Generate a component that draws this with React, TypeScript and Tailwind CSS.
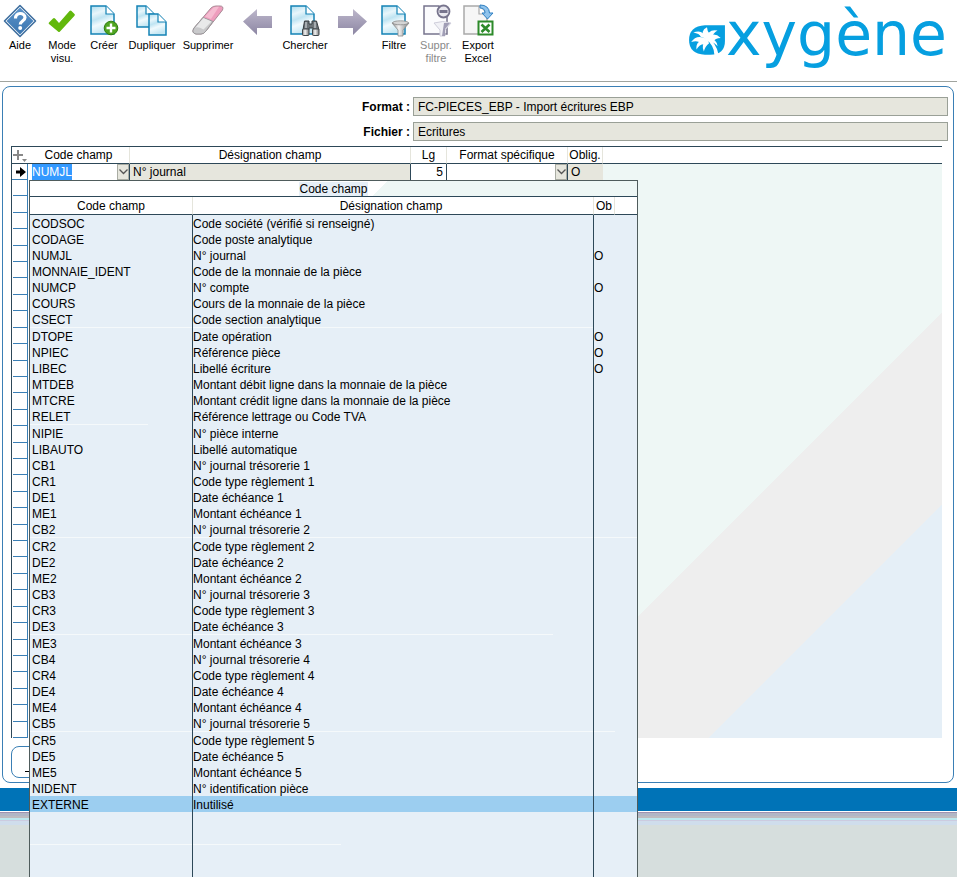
import React, { useState } from "react";

interface Field {
  code: string;
  label: string;
  required?: boolean;
}

// Fields offered by the drop-down. "rule" holds the width of the pale line
// that closes each block, one entry per column it crosses.
const fieldGroups: { rule: string[]; fields: Field[] }[] = [
  {
    rule: ["w-full", "w-full", "", ""],
    fields: [
      { code: "CODSOC", label: "Code société (vérifié si renseigné)" },
      { code: "CODAGE", label: "Code poste analytique" },
      { code: "NUMJL", label: "N° journal", required: true },
      { code: "MONNAIE_IDENT", label: "Code de la monnaie de la pièce" },
      { code: "NUMCP", label: "N° compte", required: true },
      { code: "COURS", label: "Cours de la monnaie de la pièce" },
      { code: "CSECT", label: "Code section analytique" },
    ],
  },
  {
    rule: ["w-[118px]", "", "", ""],
    fields: [
      { code: "DTOPE", label: "Date opération", required: true },
      { code: "NPIEC", label: "Référence pièce", required: true },
      { code: "LIBEC", label: "Libellé écriture", required: true },
      { code: "MTDEB", label: "Montant débit ligne dans la monnaie de la pièce" },
      { code: "MTCRE", label: "Montant crédit ligne dans la monnaie de la pièce" },
      { code: "RELET", label: "Référence lettrage ou Code TVA" },
    ],
  },
  {
    rule: ["w-full", "w-full", "w-full", "w-full"],
    fields: [
      { code: "NIPIE", label: "N° pièce interne" },
      { code: "LIBAUTO", label: "Libellé automatique" },
      { code: "CB1", label: "N° journal trésorerie 1" },
      { code: "CR1", label: "Code type règlement 1" },
      { code: "DE1", label: "Date échéance 1" },
      { code: "ME1", label: "Montant échéance 1" },
      { code: "CB2", label: "N° journal trésorerie 2" },
    ],
  },
  {
    rule: ["w-full", "w-[360px]", "", ""],
    fields: [
      { code: "CR2", label: "Code type règlement 2" },
      { code: "DE2", label: "Date échéance 2" },
      { code: "ME2", label: "Montant échéance 2" },
      { code: "CB3", label: "N° journal trésorerie 3" },
      { code: "CR3", label: "Code type règlement 3" },
      { code: "DE3", label: "Date échéance 3" },
    ],
  },
  {
    rule: ["w-full", "w-full", "w-full", ""],
    fields: [
      { code: "ME3", label: "Montant échéance 3" },
      { code: "CB4", label: "N° journal trésorerie 4" },
      { code: "CR4", label: "Code type règlement 4" },
      { code: "DE4", label: "Date échéance 4" },
      { code: "ME4", label: "Montant échéance 4" },
      { code: "CB5", label: "N° journal trésorerie 5" },
    ],
  },
  {
    rule: [],
    fields: [
      { code: "CR5", label: "Code type règlement 5" },
      { code: "DE5", label: "Date échéance 5" },
      { code: "ME5", label: "Montant échéance 5" },
      { code: "NIDENT", label: "N° identification pièce" },
      { code: "EXTERNE", label: "Inutilisé" },
    ],
  },
];

const GUTTER_ROWS = 34;

function Page({ x = 0, y = 0, w = 24, h = 29, stroke = "#1583b5", fill = "url(#sheet)" }) {
  const fold = 8;
  return (
    <g>
      <path
        d={`M${x + 1} ${y + 1}h${w - fold}l${fold} ${fold}v${h - fold}h${-w}z`}
        fill={fill}
        stroke={stroke}
        strokeWidth="1.5"
      />
      <path d={`M${x + 1 + w - fold} ${y + 1}v${fold}h${fold}`} fill="#fff" stroke={stroke} strokeWidth="1.2" />
    </g>
  );
}

function Defs() {
  return (
    <svg width="0" height="0" className="absolute" aria-hidden="true">
      <defs>
        <linearGradient id="sheet" x1="0" y1="0" x2="0.3" y2="1">
          <stop offset="0" stopColor="#a9dcef" />
          <stop offset="0.3" stopColor="#e8f6fb" />
          <stop offset="0.5" stopColor="#bfe4f2" />
          <stop offset="0.7" stopColor="#f1fafd" />
          <stop offset="1" stopColor="#c5e7f3" />
        </linearGradient>
        <linearGradient id="metal" x1="0" y1="0" x2="1" y2="0">
          <stop offset="0" stopColor="#8a8a8a" />
          <stop offset="0.4" stopColor="#f4f4f4" />
          <stop offset="1" stopColor="#7b7b7b" />
        </linearGradient>
        <linearGradient id="arrow" x1="0" y1="0" x2="0" y2="1">
          <stop offset="0" stopColor="#bdb7cb" />
          <stop offset="1" stopColor="#8c86a3" />
        </linearGradient>
        <linearGradient id="diamond" x1="0" y1="0" x2="0" y2="1">
          <stop offset="0" stopColor="#5b93c9" />
          <stop offset="1" stopColor="#3a75b0" />
        </linearGradient>
      </defs>
    </svg>
  );
}

const HelpIcon = () => (
  <svg width="34" height="34" viewBox="0 0 34 34">
    <path d="M17 1.500 32.500 17 17 32.500 1.500 17z" fill="#fff" stroke="#3f6f9f" strokeWidth="1.600" strokeLinejoin="round" />
    <path d="M17 3.500 30.500 17 17 30.500 3.500 17z" fill="url(#diamond)" />
    <path d="M12.500 14.500c-.5-6.500 9.500-6.500 9.500-1 0 3.500-4.800 3.500-4.800 7" fill="none" stroke="#fff" strokeWidth="3.200" />
    <circle cx="17.200" cy="24" r="2" fill="#fff" />
  </svg>
);

const CheckIcon = () => (
  <svg width="34" height="34" viewBox="0 0 34 34">
    <path
      d="M4 18.500 8 14.500q1-.8 2 0l4 4.500L24.500 7q1-1 2 0l3 3q.8.800 0 1.700L15 27.500q-1 1-2 0L4 20q-.8-.8 0-1.500z"
      fill="#62b80c"
    />
  </svg>
);

const CreateIcon = () => (
  <svg width="34" height="34" viewBox="0 0 34 34">
    <Page x={3} y={1} w={23} h={28} />
    <circle cx="24" cy="24" r="6.800" fill="#4fa41f" stroke="#2f7d0f" />
    <path d="M24 19.500v9M19.500 24h9" stroke="#fff" strokeWidth="2.400" />
  </svg>
);

const DuplicateIcon = () => (
  <svg width="34" height="34" viewBox="0 0 34 34">
    <Page x={1} y={1} w={17} h={21} />
    <Page x={13} y={9} w={17} h={21} />
  </svg>
);

const EraserIcon = () => (
  <svg width="34" height="34" viewBox="0 0 34 34">
    <path d="M3 24 20 4q2-2 5-2h4q4 0 2.500 4L15 27q-2 3-5 3H5q-5-1-2-6z" fill="#ee9dbd" stroke="#a98b96" />
    <path d="M3 24 12 13.500l10 4L15 27q-2 3-5 3H5q-5-1-2-6z" fill="#c9c9cb" stroke="#9a9a9c" />
    <path d="M4.500 23.500 12.500 14l8 3.500-8 8q-5-3-8-2z" fill="#e9e9ea" />
    <path d="M14 12.500 22 4q2-1.500 6-1.200L20 15z" fill="#f5bcd1" />
  </svg>
);

const PrevIcon = () => (
  <svg width="34" height="34" viewBox="0 0 34 34">
    <path d="M2 17.500 16 5v7h15v12H16v7z" fill="url(#arrow)" />
  </svg>
);

const NextIcon = () => (
  <svg width="34" height="34" viewBox="0 0 34 34">
    <path d="M32 17.500 18 5v7H3v12h15v7z" fill="url(#arrow)" />
  </svg>
);

const SearchIcon = () => (
  <svg width="34" height="34" viewBox="0 0 34 34">
    <Page x={2} y={1} w={23} h={28} />
    <path d="M16.500 17h4.500v3h3v-3h4.500l2.500 9h-6v-2h-4v2h-6z" fill="#6d7478" stroke="#363c40" />
    <path d="M18 18v6M27 18v6" stroke="#b9bfc2" strokeWidth="1.500" />
    <rect x="14.500" y="25" width="6.500" height="6.500" rx="1" fill="url(#metal)" stroke="#40474b" />
    <rect x="24.500" y="25" width="6.500" height="6.500" rx="1" fill="url(#metal)" stroke="#40474b" />
  </svg>
);

const FilterIcon = () => (
  <svg width="34" height="34" viewBox="0 0 34 34">
    <Page x={4} y={1} w={23} h={28} />
    <path d="M15 19q9-3 17 0l-6 7v6h-5v-6z" fill="url(#metal)" stroke="#8b8b8b" strokeWidth=".8" />
    <ellipse cx="23.500" cy="18.800" rx="8" ry="2" fill="#d5d5d5" stroke="#8b8b8b" strokeWidth=".8" />
  </svg>
);

const ClearFilterIcon = () => (
  <svg width="34" height="34" viewBox="0 0 34 34">
    <Page x={4} y={1} w={23} h={28} stroke="#77748d" fill="#fbfbfd" />
    <circle cx="24.500" cy="7.500" r="6" fill="#e9e8ef" stroke="#77748d" strokeWidth="1.800" />
    <path d="M20.500 7.500h8" stroke="#77748d" strokeWidth="3" />
    <path d="M15 19q9-3 17 0l-6 7v6h-5v-6z" fill="#f1f1f6" stroke="#cfcedb" />
    <path d="M25 19h6l-5 6v7h-3z" fill="#a19eb6" />
  </svg>
);

const ExcelIcon = () => (
  <svg width="34" height="34" viewBox="0 0 34 34">
    <Page x={2} y={1} w={23} h={28} stroke="#a9a9a9" fill="#f6f6f6" />
    <path d="M19 1q9 0 9.500 8h3.500l-5.500 6-5.500-6h3q0-5-5-5z" fill="#8fc3ec" stroke="#2f7fc1" />
    <rect x="17.500" y="17.500" width="14" height="13" fill="#fff" stroke="#2d8a2a" strokeWidth="2" />
    <path d="m20.500 20.500 8 7.500m0-7.500-8 7.500" stroke="#2d8a2a" strokeWidth="2.600" />
  </svg>
);

interface ToolProps {
  icon: React.ReactNode;
  label?: string;
  name?: string;
  width: string;
  disabled?: boolean;
}

function Tool({ icon, label, name, width, disabled }: ToolProps) {
  return (
    <button
      type="button"
      aria-label={name}
      disabled={disabled}
      className={`flex shrink-0 flex-col items-center gap-px text-[11px] leading-[13px] ${width} ${
        disabled ? "text-[#8a8a8a]" : "text-black"
      }`}
    >
      {icon}
      {label && <span className="whitespace-pre-line">{label}</span>}
    </button>
  );
}

function Logo() {
  return (
    <div className="ml-auto flex items-start pr-[10px]">
      <svg width="38" height="32" viewBox="0 0 36 30" className="mt-5" role="img" aria-label="o">
        <path d="M16 1H35V16Q35 29 21 29H16Q1 28 1 15 1 2 16 1z" fill="#069fe0" />
        <path d="M16 13q9 7 9 16h4q-2-11-11-17z" fill="#fff" />
        <g fill="#fff">
          <path d="M18 14Q14 4 5 8q6 1 7 4z" />
          <path d="M18 14Q8 9 3 17q6-2 9 1z" />
          <path d="M18 14Q7 15 8 24q3-5 7-5z" />
          <path d="M18 14Q12 19 15 26q1-5 5-8z" />
          <path d="M16 14Q11 6 18 3q0 4 3 7z" />
          <path d="M17 14Q19 4 28 6q-4 2-5 6z" />
          <path d="M16 14Q24 6 31 13q-5 0-8 4z" />
          <path d="M16 14Q27 12 28 21q-3-4-8-4z" />
        </g>
      </svg>
      <span className="font-['DejaVu_Sans',sans-serif] text-[60px] leading-[60px] text-[#069fe0]">xygène</span>
    </div>
  );
}

function ComboArrow({ label }: { label: string }) {
  return (
    <button
      type="button"
      aria-label={label}
      className="flex h-4 w-3 shrink-0 items-center justify-center border border-[#a9aca3] bg-[#e6e6dd]"
    >
      <svg width="9" height="6" viewBox="0 0 9 6">
        <path d="m.5.500 4 4 4-4" fill="none" stroke="#555" strokeWidth="1.300" />
      </svg>
    </button>
  );
}

function RuleRow({ widths }: { widths: string[] }) {
  return (
    <tr className="h-px" aria-hidden="true">
      {widths.map((width, ind) => (
        <td key={ind} className={`p-0 ${ind < 2 ? "border-r border-[#2d4858]" : ""}`}>
          <div className={`h-px ${width ? "bg-[#f5f9fb]" : ""} ${width}`} />
        </td>
      ))}
    </tr>
  );
}

function BlankRow({ height }: { height: string }) {
  return (
    <tr className={height} aria-hidden="true">
      <td className="border-r border-[#2d4858]" />
      <td className="border-r border-[#2d4858]" />
      <td />
      <td />
    </tr>
  );
}

function FieldPicker({ selected, onSelect }: { selected: string; onSelect: (code: string) => void }) {
  return (
    <div className="absolute top-[33px] left-[17px] z-10 w-[609px] border border-[#4f5c5c] bg-[#e6eff7]">
      <table className="w-full table-fixed border-separate border-spacing-0">
        <colgroup>
          <col className="w-[163px]" />
          <col className="w-[401px]" />
          <col className="w-[21px]" />
          <col />
        </colgroup>
        <caption className="h-4 border-b border-[#2d4858] bg-[linear-gradient(135deg,#fff_253px,#eef7f5_253px)] leading-4">
          <span className="bg-[#e6eff7]">Code champ</span>
        </caption>
        <thead>
          <tr className="h-[18px] bg-white leading-4 [&>th]:border-b [&>th]:border-b-[#2d4858] [&>th]:font-normal">
            <th className="border-r border-r-[#e5e5dc]">Code champ</th>
            <th className="border-r border-r-[#e5e5dc] pr-1">Désignation champ</th>
            <th className="border-r border-r-[#e5e5dc]">Ob</th>
            <th aria-label="Suite" />
          </tr>
        </thead>
        {fieldGroups.map((group, ind) => (
          <tbody key={ind}>
            {group.fields.map((field) => (
              <tr
                key={field.code}
                onClick={() => onSelect(field.code)}
                className={`h-4 leading-[14px] [&>td]:pt-[2px] ${field.code === selected ? "bg-[#9ccef0]" : ""}`}
              >
                <td className="border-r border-[#2d4858] pl-[2px]">{field.code}</td>
                <td className="border-r border-[#2d4858]">{field.label}</td>
                <td>{field.required ? "O" : ""}</td>
                <td />
              </tr>
            ))}
            {group.rule.length > 0 && <RuleRow widths={group.rule} />}
          </tbody>
        ))}
        <tbody>
          <BlankRow height="h-8" />
          <RuleRow widths={["w-full", "w-[148px]", "", ""]} />
          <BlankRow height="h-24" />
        </tbody>
      </table>
    </div>
  );
}

export default function App() {
  const [selected, setSelected] = useState("EXTERNE");

  return (
    <div className="relative flex min-h-screen flex-col overflow-hidden bg-white font-['Liberation_Sans',Arial,sans-serif] text-[12px] text-black">
      <Defs />

      {/* Toolbar */}
      <header className="flex h-[82px] items-start border-b border-[#a0a49f] pt-1">
        <Tool width="w-10" icon={<HelpIcon />} label="Aide" />
        <Tool width="w-11" icon={<CheckIcon />} label={"Mode\nvisu."} />
        <Tool width="w-10" icon={<CreateIcon />} label="Créer" />
        <Tool width="w-14" icon={<DuplicateIcon />} label="Dupliquer" />
        <Tool width="w-14" icon={<EraserIcon />} label="Supprimer" />
        <Tool width="w-11" icon={<PrevIcon />} name="Précédent" />
        <Tool width="w-[50px]" icon={<SearchIcon />} label="Chercher" />
        <Tool width="w-11" icon={<NextIcon />} name="Suivant" />
        <Tool width="w-10" icon={<FilterIcon />} label="Filtre" />
        <Tool width="w-11" icon={<ClearFilterIcon />} label={"Suppr.\nfiltre"} disabled />
        <Tool width="w-10" icon={<ExcelIcon />} label={"Export\nExcel"} />
        <Logo />
      </header>

      {/* Form panel */}
      <main className="mt-1 mr-[3px] mb-[5px] ml-[2px] rounded-lg border border-[#3a7fb5] px-2 pt-[10px] pb-1">
        <div className="mr-[-3px] grid grid-cols-[399px_1fr] items-center gap-x-[3px] gap-y-[6px] pb-[5px]">
          <label htmlFor="format" className="text-right font-bold">Format :</label>
          <input
            id="format"
            readOnly
            value="FC-PIECES_EBP - Import écritures EBP"
            className="h-[19px] min-w-0 border border-[#9aa097] bg-[#e6e6dd] px-1"
          />
          <label htmlFor="fichier" className="text-right font-bold">Fichier :</label>
          <input
            id="fichier"
            readOnly
            value="Ecritures"
            className="h-[19px] min-w-0 border border-[#9aa097] bg-[#e6e6dd] px-1"
          />
        </div>

        <div className="relative mr-[3px] border-t border-l border-[#2d4858] bg-[linear-gradient(315deg,#e5eff7_165px,#eeeeee_165px,#eeeeee_301px,#eef7f5_301px)]">
          <table className="w-full table-fixed border-separate border-spacing-0">
            <colgroup>
              <col className="w-4" />
              <col className="w-[102px]" />
              <col className="w-[281px]" />
              <col className="w-9" />
              <col className="w-[121px]" />
              <col className="w-[35px]" />
              <col />
            </colgroup>
            <thead>
              <tr className="h-[17px] bg-white leading-4 [&>th]:border-b [&>th]:border-b-[#2d4858] [&>th]:font-normal">
                <th aria-label="Ajouter">
                  <svg width="15" height="13" viewBox="0 0 15 13">
                    <path d="M1 6h10M6 1v10" stroke="#888" strokeWidth="2" />
                    <path d="M10 10h5l-2.500 3z" fill="#888" />
                  </svg>
                </th>
                <th className="border-r border-r-[#e5e5dc]">Code champ</th>
                <th className="border-r border-r-[#e5e5dc]">Désignation champ</th>
                <th className="border-r border-r-[#e5e5dc]">Lg</th>
                <th className="border-r border-r-[#e5e5dc]">Format spécifique</th>
                <th className="border-r border-r-[#e5e5dc]">Oblig.</th>
                <th aria-label="Suite" />
              </tr>
            </thead>
            <tbody>
              <tr className="h-4 leading-4">
                <td className="border-r border-b border-[#3a7fb5] bg-white pl-1">
                  <svg width="10" height="10" viewBox="0 0 10 10">
                    <path d="M0 3.500h4V0l6 5-6 5V6.500H0z" fill="#000" />
                  </svg>
                </td>
                <td className="border-r border-[#2d4858] bg-white">
                  <div className="flex justify-between pl-1">
                    <span className="bg-[#3399ff] text-white">NUMJL</span>
                    <ComboArrow label="Choisir le code champ" />
                  </div>
                </td>
                <td className="border-r border-[#2d4858] bg-[#e6e6dd] pl-[3px]">N° journal</td>
                <td className="border-r border-[#2d4858] bg-white pr-[3px] text-right">5</td>
                <td className="border-r border-[#2d4858] bg-white">
                  <div className="flex justify-end">
                    <ComboArrow label="Choisir le format spécifique" />
                  </div>
                </td>
                <td className="bg-[#e6e6dd] pl-[3px]">O</td>
                <td />
              </tr>
            </tbody>
          </table>
          <div className="h-[558px] w-[17px] bg-white">
            <div className="grid h-full w-4 auto-rows-fr pl-px">
              {Array.from({ length: GUTTER_ROWS }, (_, i) => (
                <div key={i} className="border-r border-b border-[#3a7fb5]" />
              ))}
            </div>
          </div>
          <FieldPicker selected={selected} onSelect={setSelected} />
        </div>

        <button
          type="button"
          aria-label="Actions"
          className="mt-2 flex h-8 w-24 items-end rounded-lg border border-[#3a7fb5] pb-[5px] pl-[13px]"
        >
          <span className="h-px w-6 bg-black" />
        </button>
      </main>

      {/* Bottom band */}
      <div className="h-[23px] bg-[#0073b7]" />
      <footer className="mt-px flex-1 bg-[#d6dedd]">
        <div className="h-px bg-[#a093b0]" />
        <div className="h-[3px] bg-[#b1b7c6]" />
        <div className="h-[2px] bg-[#bdbcc0]" />
        <div className="h-[2px] bg-[#bce8ee]" />
        <div className="h-px bg-[#cccbe0]" />
        <div className="h-1 bg-[#cfddec]" />
      </footer>
    </div>
  );
}
